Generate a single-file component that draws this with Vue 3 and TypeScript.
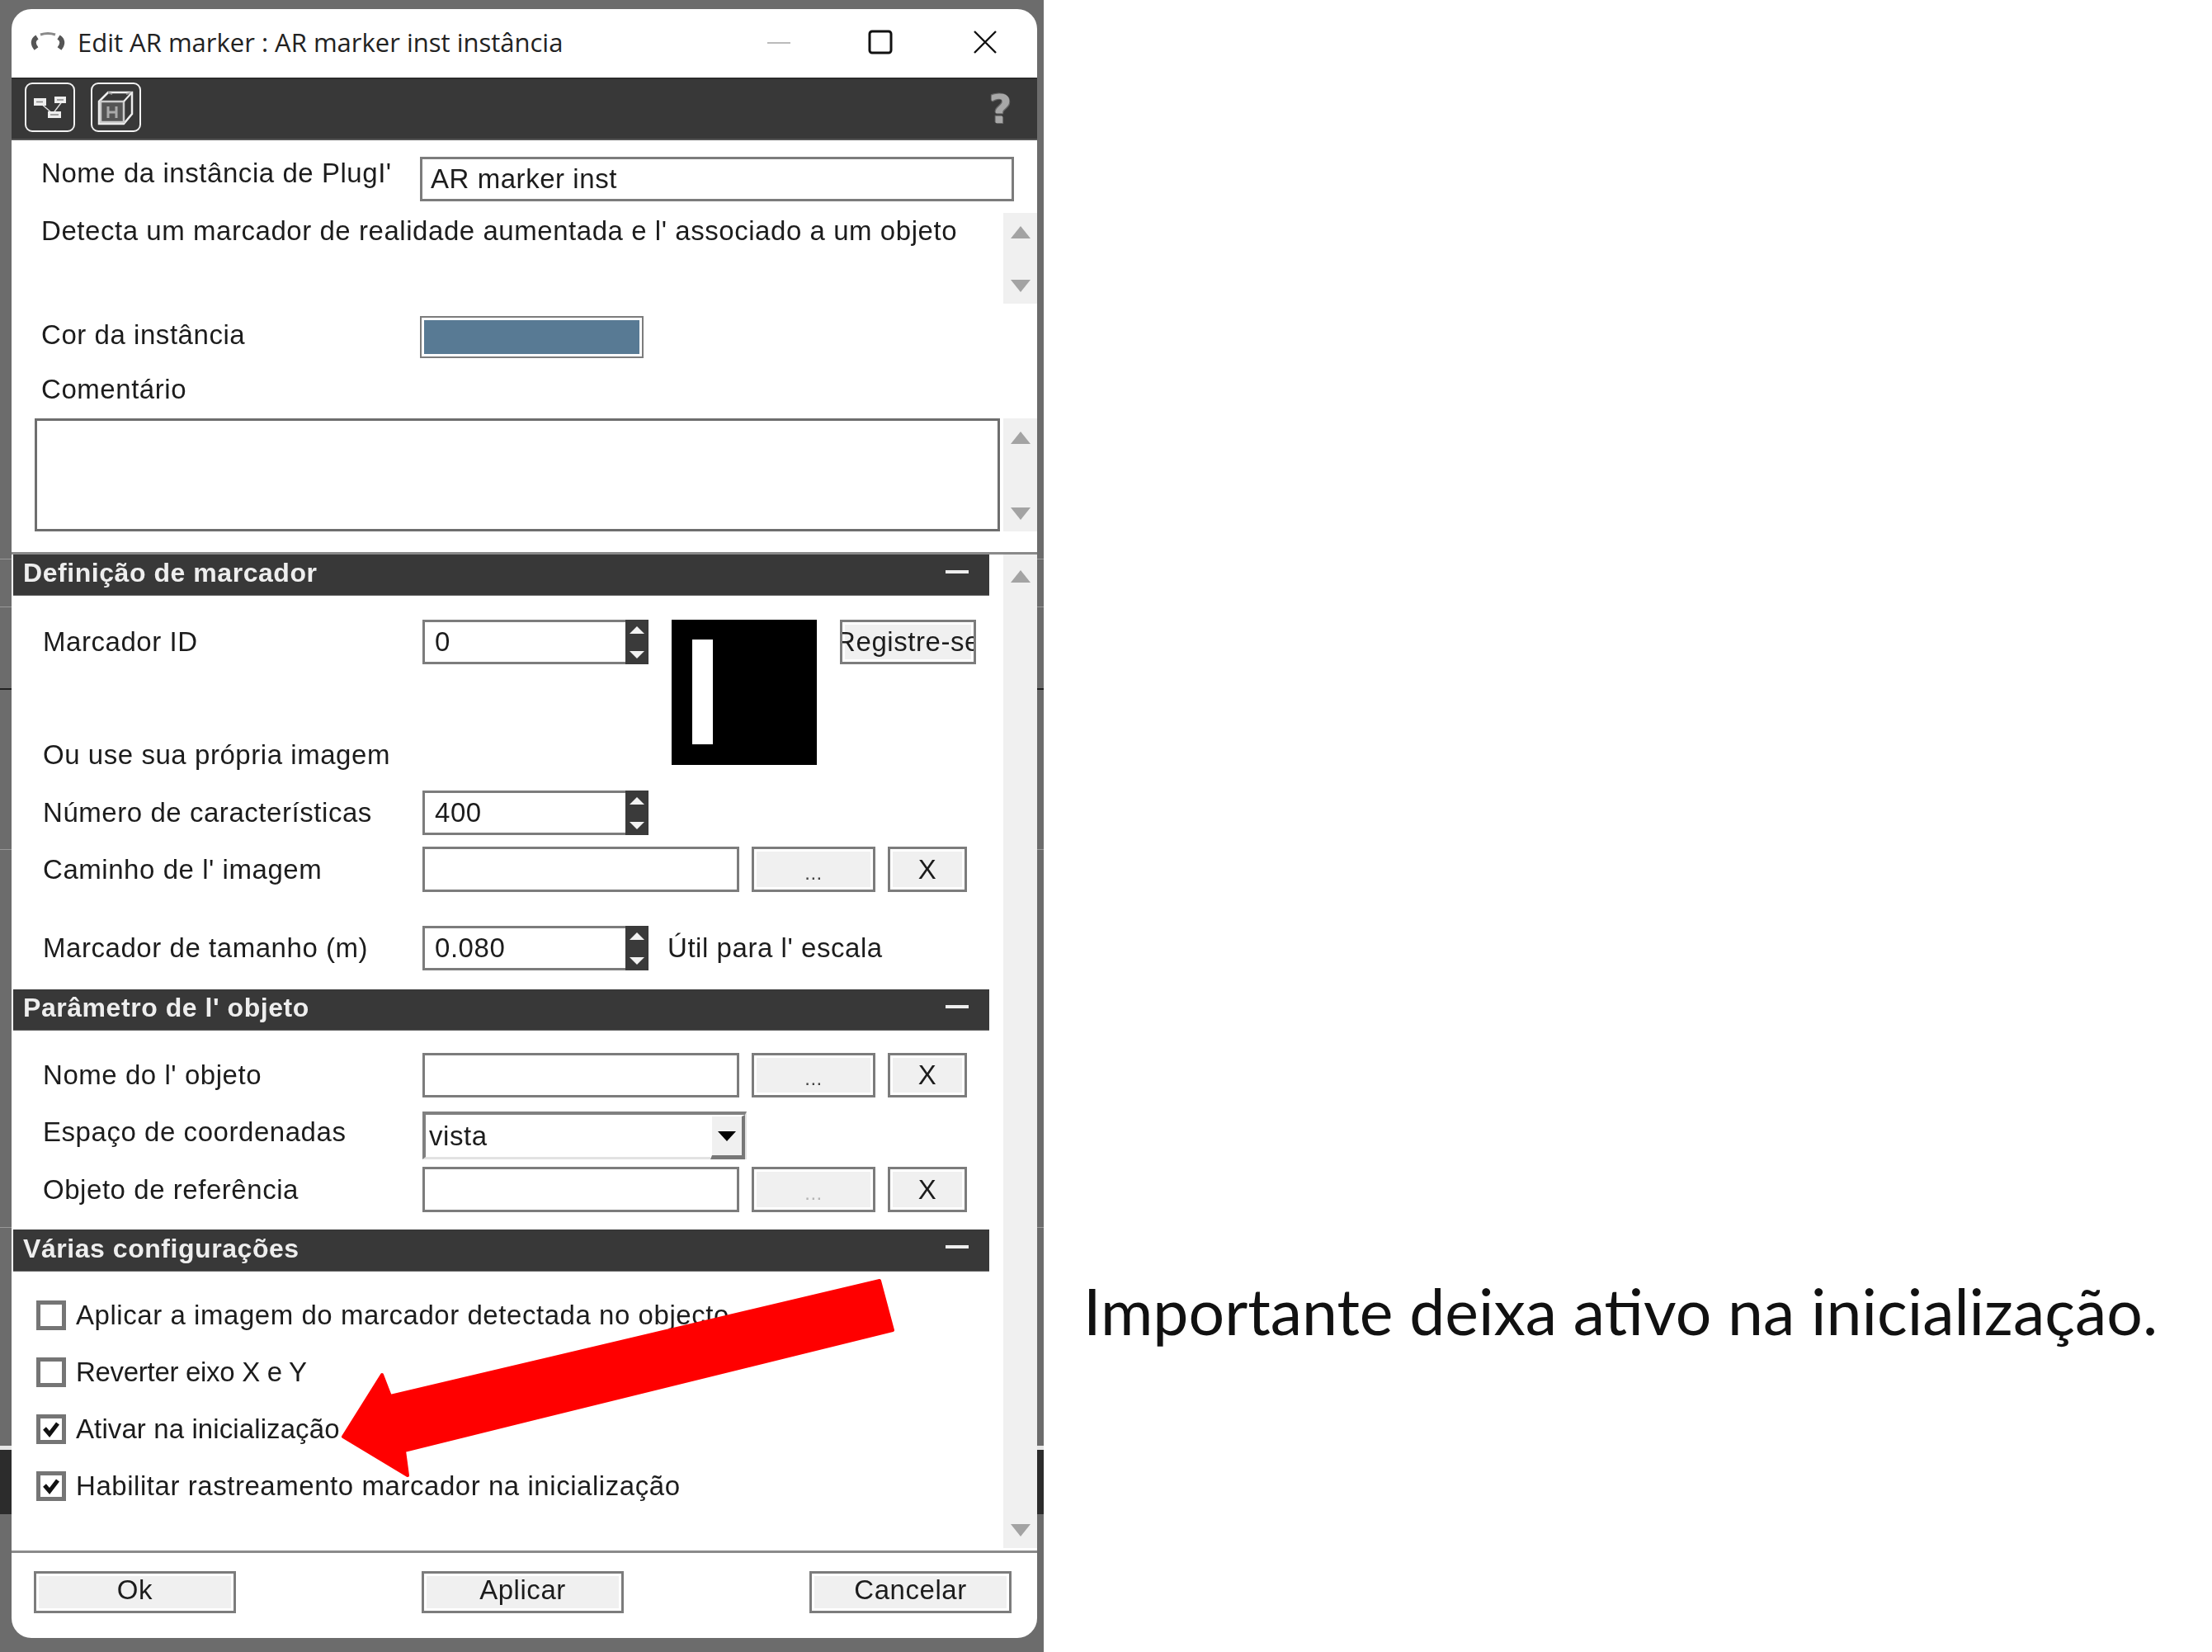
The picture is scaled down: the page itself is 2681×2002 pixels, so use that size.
<script setup lang="ts">
const checks = [
  { label: 'Aplicar a imagem do marcador detectada no objecto', on: false, spacing: 'normal' },
  { label: 'Reverter eixo X e Y', on: false, spacing: 'tighter' },
  { label: 'Ativar na inicialização', on: true, spacing: 'tight' },
  { label: 'Habilitar rastreamento marcador na inicialização', on: true, spacing: 'normal' },
]
const actions = ['Ok', 'Aplicar', 'Cancelar']
</script>

<template>
  <div class="page">
    <div class="backdrop">
      <div class="window">
        <header class="titlebar">
          <svg class="app-icon" width="44" height="26" viewBox="0 0 44 26">
            <path d="M13 4 Q22 1 31 4" fill="none" stroke="#8a8a8a" stroke-width="3" />
            <path d="M9 7 Q1 12 8 21" fill="none" stroke="#555" stroke-width="6" />
            <path d="M35 7 Q43 12 36 21" fill="none" stroke="#555" stroke-width="6" />
          </svg>
          <span class="title">Edit AR marker : AR marker inst instância</span>
          <svg class="win-min" width="28" height="4" viewBox="0 0 28 4"><path d="M0 2H28" stroke="#bbb" stroke-width="2" /></svg>
          <svg class="win-max" width="30" height="30" viewBox="0 0 30 30"><rect x="2" y="2" width="26" height="26" rx="3" fill="none" stroke="#111" stroke-width="3" /></svg>
          <svg class="win-close" width="30" height="30" viewBox="0 0 30 30"><path d="M2 2L28 28M28 2L2 28" stroke="#111" stroke-width="2.4" /></svg>
        </header>

        <div class="toolbar">
          <span class="tool-btn">
            <svg width="61" height="60" viewBox="0 0 61 60">
              <path d="M18 24L34 38L46 22" fill="none" stroke="#ddd" stroke-width="1.5" />
              <rect x="11" y="19" width="15" height="9" fill="#eee" />
              <rect x="36" y="17" width="14" height="8" fill="#eee" />
              <rect x="28" y="35" width="16" height="8" fill="#eee" />
              <path d="M14 23.500H22M39 21H47M31 39H41" stroke="#888" stroke-width="1.5" />
            </svg>
          </span>
          <span class="tool-btn">
            <svg width="61" height="60" viewBox="0 0 61 60">
              <path d="M10 23L21 12H50V38L40 50H10Z" fill="none" stroke="#eee" stroke-width="2.500" />
              <path d="M21 12L26 14M43 14L50 12" stroke="#999" stroke-width="2" />
              <rect x="12" y="23" width="28" height="25" fill="#555" stroke="#ccc" stroke-width="2.500" />
              <path d="M40 23L50 12" stroke="#eee" stroke-width="2" />
              <path d="M21 29V43M31 29V43M21 36H31" stroke="#aaa" stroke-width="3" fill="none" />
            </svg>
          </span>
          <span class="help">?</span>
        </div>

        <section class="top-panel">
          <div class="row name-row">
            <label class="top-label name-label">Nome da instância de PlugI'</label>
            <input class="field name-field" value="AR marker inst" readonly />
          </div>
          <div class="desc-row">
            <p class="desc">Detecta um marcador de realidade aumentada e l' associado a um objeto</p>
            <div class="scroll-strip">
              <i class="arrow-up"></i>
              <i class="arrow-down"></i>
            </div>
          </div>
          <div class="row color-row">
            <label class="top-label color-label">Cor da instância</label>
            <span class="swatch"><b></b></span>
          </div>
          <div class="comment-label">Comentário</div>
          <div class="comment-row">
            <div class="comment-box"></div>
            <div class="scroll-strip comment-strip">
              <i class="arrow-up"></i>
              <i class="arrow-down"></i>
            </div>
          </div>
        </section>

        <div class="scroll-area">
          <div class="sections">
            <div class="section-head">
              <span>Definição de marcador</span><i class="collapse"></i>
            </div>
            <div class="section-body def-body">
              <div class="marker-top">
                <div class="marker-left">
                  <div class="row">
                    <label class="row-label">Marcador ID</label>
                    <div class="spin"><input class="field spin-field" value="0" readonly /><span class="spin-btn"><i></i><i></i></span></div>
                  </div>
                  <div class="own-image">Ou use sua própria imagem</div>
                </div>
                <div class="marker-image"><b></b></div>
                <button class="btn register"><span>Registre-se</span></button>
              </div>
              <div class="row count-row">
                <label class="row-label">Número de características</label>
                <div class="spin"><input class="field spin-field" value="400" readonly /><span class="spin-btn"><i></i><i></i></span></div>
              </div>
              <div class="row path-row">
                <label class="row-label">Caminho de l' imagem</label>
                <input class="field path-field" readonly />
                <button class="btn dots">...</button>
                <button class="btn clear">X</button>
              </div>
              <div class="row size-row">
                <label class="row-label">Marcador de tamanho (m)</label>
                <div class="spin"><input class="field spin-field" value="0.080" readonly /><span class="spin-btn"><i></i><i></i></span></div>
                <span class="hint">Útil para l' escala</span>
              </div>
            </div>

            <div class="section-head">
              <span>Parâmetro de l' objeto</span><i class="collapse"></i>
            </div>
            <div class="section-body obj-body">
              <div class="row object-row">
                <label class="row-label">Nome do l' objeto</label>
                <input class="field path-field" readonly />
                <button class="btn dots">...</button>
                <button class="btn clear">X</button>
              </div>
              <div class="row coord-row">
                <label class="row-label coord-label">Espaço de coordenadas</label>
                <div class="combo">
                  <span class="combo-value">vista</span>
                  <span class="combo-btn"><i></i></span>
                </div>
              </div>
              <div class="row ref-row">
                <label class="row-label">Objeto de referência</label>
                <input class="field path-field" readonly />
                <button class="btn dots dots-off">...</button>
                <button class="btn clear">X</button>
              </div>
            </div>

            <div class="section-head misc-head">
              <span>Várias configurações</span><i class="collapse"></i>
            </div>
            <div class="check-list">
              <div v-for="c in checks" :key="c.label" class="check-row" :class="c.spacing">
                <span class="check">
                  <svg v-if="c.on" width="26" height="26" viewBox="0 0 26 26">
                    <path d="M5 12L11 19L21 6" fill="none" stroke="#111" stroke-width="5" />
                  </svg>
                </span>
                <span>{{ c.label }}</span>
              </div>
            </div>
          </div>
          <div class="scroll-strip main-strip">
            <i class="arrow-up"></i>
            <i class="arrow-down"></i>
          </div>
        </div>

        <footer class="footer">
          <button v-for="a in actions" :key="a" class="btn action">{{ a }}</button>
        </footer>
      </div>

      <svg class="callout" width="720" height="270" viewBox="400 1540 720 270">
        <polygon
          points="1066,1552 1082,1612 490,1758 494,1788 416,1741 463,1666 473,1692"
          fill="#ff0000"
          stroke="#ff0000"
          stroke-width="4"
          stroke-linejoin="round"
        />
      </svg>
    </div>

    <div class="note">Importante deixa ativo na inicialização.</div>
  </div>
</template>

<style>
html,
body {
  margin: 0;
  background: #fff;
}
</style>

<style scoped>
.page {
  display: flex;
  width: 2681px;
  height: 2002px;
  background: #fff;
  overflow: hidden;
}

.backdrop {
  position: relative;
  flex: none;
  width: 1265px;
  height: 2002px;
  box-sizing: border-box;
  padding: 11px 8px 17px 14px;
  background:
    linear-gradient(#e6e6e6, #e6e6e6) 0 1752px / 100% 5px no-repeat,
    linear-gradient(#2c2c2c, #2c2c2c) 0 1757px / 100% 78px no-repeat,
    linear-gradient(#222, #222) 0 834px / 100% 2px no-repeat,
    linear-gradient(#999, #999) 0 677px / 100% 1px no-repeat,
    linear-gradient(#999, #999) 0 735px / 100% 1px no-repeat,
    linear-gradient(#999, #999) 0 1029px / 100% 1px no-repeat,
    linear-gradient(#999, #999) 0 1487px / 100% 1px no-repeat,
    #6c6c6c;
}

.window {
  display: flex;
  flex-direction: column;
  height: 1974px;
  background: #fff;
  border-radius: 24px;
  overflow: hidden;
  font-family: "Liberation Sans", Arial, sans-serif;
  font-size: 33px;
  letter-spacing: 0.55px;
  color: #1c1c1c;
  filter: blur(0.55px);
}

.titlebar {
  display: flex;
  align-items: center;
  flex: none;
  height: 83px;
  padding: 0 0 3px 22px;
  box-sizing: border-box;
}

.title {
  margin-left: 14px;
  font-family: "Open Sans", sans-serif;
  font-size: 31px;
  letter-spacing: 0;
  white-space: nowrap;
  color: #222;
}

.win-min {
  margin-left: auto;
  margin-top: 2px;
}

.win-max {
  margin-left: 94px;
}

.win-close {
  margin-left: 97px;
  margin-right: 48px;
}

.toolbar {
  display: flex;
  align-items: center;
  flex: none;
  height: 76px;
  padding: 0 30px 4px 16px;
  box-sizing: border-box;
  gap: 19px;
  background: #383838;
  border-top: 2px solid #2a2a2a;
  border-bottom: 2px solid #555;
}

.tool-btn {
  display: block;
  width: 61px;
  height: 60px;
  box-sizing: border-box;
  border: 2.500px solid #f2f2f2;
  border-radius: 9px;
}

.tool-btn svg {
  display: block;
  margin: -2.500px;
}

.help {
  margin-left: auto;
  padding-top: 4px;
  font-family: "DejaVu Sans", sans-serif;
  font-weight: 700;
  font-size: 48px;
  line-height: 50px;
  color: #a8a8a8;
  text-shadow: 1px 1px 0 #666, -1px -1px 0 #666;
}

.top-panel {
  flex: none;
  height: 502px;
  box-sizing: border-box;
  border-bottom: 3px solid #8a8a8a;
  padding-top: 20px;
}

.row {
  display: flex;
  align-items: center;
  height: 54px;
}

.name-row,
.color-row {
  padding-left: 36px;
}

.color-row {
  height: 51px;
  margin-top: 15px;
}

.top-label {
  flex: none;
  width: 459px;
  white-space: nowrap;
}

.name-label {
  margin-bottom: 14px;
}

.color-label {
  margin-bottom: 6px;
}

.field {
  display: block;
  box-sizing: border-box;
  height: 54px;
  margin: 0;
  padding: 0 0 0 10px;
  border: 3px solid #7c7c7c;
  border-radius: 0;
  outline: none;
  background: #fff;
  font: inherit;
  letter-spacing: inherit;
  color: inherit;
}

.name-field {
  width: 720px;
}

.desc-row {
  display: flex;
  justify-content: flex-end;
  position: relative;
  height: 110px;
  margin-top: 14px;
}

.desc {
  position: absolute;
  left: 36px;
  top: 2px;
  margin: 0;
  white-space: nowrap;
  line-height: 40px;
}

.scroll-strip {
  display: flex;
  flex-direction: column;
  align-items: center;
  justify-content: space-between;
  flex: none;
  width: 41px;
  box-sizing: border-box;
  padding: 16px 0 14px;
  background: #f0f0f0;
}

.arrow-up,
.arrow-down {
  display: block;
  width: 0;
  height: 0;
  border-left: 12px solid transparent;
  border-right: 12px solid transparent;
}

.arrow-up {
  border-bottom: 15px solid #a3a3a3;
}

.arrow-down {
  border-top: 15px solid #a3a3a3;
}

.swatch {
  display: block;
  box-sizing: border-box;
  width: 271px;
  height: 51px;
  padding: 3px;
  border: 2px solid #7c7c7c;
  background: #fff;
}

.swatch b {
  display: block;
  height: 100%;
  background: #587a94;
}

.comment-label {
  height: 44px;
  margin: 16px 0 13px 36px;
  line-height: 44px;
}

.comment-row {
  display: flex;
  gap: 4px;
  height: 137px;
  padding-left: 28px;
}

.comment-box {
  flex: none;
  width: 1170px;
  box-sizing: border-box;
  border: 3px solid #6e6e6e;
  background: #fff;
}

.scroll-area {
  display: flex;
  flex: none;
  height: 1207px;
  padding-left: 2px;
  gap: 17px;
}

.sections {
  flex: none;
  width: 1183px;
}

.section-head {
  display: flex;
  align-items: center;
  justify-content: space-between;
  box-sizing: border-box;
  height: 50px;
  padding: 0 25px 4px 12px;
  background: #383838;
  border-bottom: 1px solid #666;
  font-weight: 700;
  font-size: 32px;
  color: #eee;
}

.misc-head {
  height: 51px;
}

.collapse {
  display: block;
  width: 28px;
  height: 4px;
  margin-bottom: 4px;
  background: #eee;
}

.section-body {
  padding-left: 36px;
}

.def-body {
  padding-top: 29px;
  padding-bottom: 23px;
}

.obj-body {
  padding-bottom: 21px;
}

.row-label {
  flex: none;
  width: 460px;
  white-space: nowrap;
}

.marker-top {
  display: flex;
  align-items: flex-start;
}

.marker-left {
  flex: none;
  width: 734px;
}

.own-image {
  height: 44px;
  margin-top: 88px;
  line-height: 44px;
  white-space: nowrap;
}

.marker-image {
  flex: none;
  width: 176px;
  height: 176px;
  margin-left: 28px;
  padding: 24px 0 0 25px;
  box-sizing: border-box;
  background: #000;
}

.marker-image b {
  display: block;
  width: 25px;
  height: 127px;
  background: #fff;
}

.btn {
  box-sizing: border-box;
  margin: 0;
  padding: 0;
  border: 3px solid #7c7c7c;
  border-radius: 0;
  background: #f0f0f0;
  box-shadow: inset 0 0 0 3px #fff;
  font: inherit;
  letter-spacing: inherit;
  color: inherit;
}

.register {
  display: flex;
  justify-content: center;
  align-items: center;
  flex: none;
  width: 165px;
  height: 54px;
  margin-left: 28px;
  overflow: hidden;
}

.register span {
  flex: none;
  white-space: nowrap;
}

.spin {
  display: flex;
  flex: none;
  width: 274px;
  height: 54px;
}

.spin-field {
  flex: none;
  width: 246px;
  padding-left: 12px;
  border-right: none;
}

.spin-btn {
  display: flex;
  flex-direction: column;
  align-items: center;
  justify-content: space-between;
  flex: none;
  width: 28px;
  box-sizing: border-box;
  padding: 8px 0 7px;
  background: #3a3a3a;
}

.spin-btn i {
  display: block;
  width: 0;
  height: 0;
  border-left: 9px solid transparent;
  border-right: 9px solid transparent;
  border-bottom: 9px solid #f2f2f2;
}

.spin-btn i:last-child {
  border-bottom: none;
  border-top: 9px solid #f2f2f2;
}

.count-row {
  height: 55px;
  margin-top: 20px;
}

.path-row {
  height: 55px;
  margin-top: 14px;
}

.size-row {
  margin-top: 41px;
}

.hint {
  margin-left: 23px;
  white-space: nowrap;
}

.path-field {
  flex: none;
  width: 384px;
  height: 100%;
}

.dots {
  flex: none;
  width: 150px;
  height: 100%;
  margin-left: 15px;
  padding-top: 8px;
  font-size: 24px;
  color: #444;
}

.dots-off {
  color: #b5b5b5;
}

.clear {
  flex: none;
  width: 96px;
  height: 100%;
  margin-left: 15px;
}

.object-row {
  margin-top: 27px;
}

.coord-row {
  height: 58px;
  margin-top: 17px;
}

.coord-label {
  margin-bottom: 8px;
}

.ref-row {
  height: 55px;
  margin-top: 9px;
}

.combo {
  display: flex;
  flex: none;
  width: 393px;
  height: 58px;
  box-sizing: border-box;
  border-top: 4px solid #808080;
  border-left: 4px solid #808080;
  border-bottom: 3px solid #e2e2e2;
  border-right: 2px solid #e2e2e2;
}

.combo-value {
  flex: 1;
  padding: 4px 0 0 4px;
  line-height: 44px;
}

.combo-btn {
  display: flex;
  align-items: center;
  justify-content: center;
  flex: none;
  width: 42px;
  box-sizing: border-box;
  border-top: 2px solid #fff;
  border-left: 2px solid #fff;
  border-right: 4px solid #777;
  border-bottom: 5px solid #777;
  margin-bottom: -3px;
  background: #f0f0f0;
}

.combo-btn i {
  display: block;
  width: 0;
  height: 0;
  border-left: 11px solid transparent;
  border-right: 11px solid transparent;
  border-top: 12px solid #000;
}

.check-list {
  display: flex;
  flex-direction: column;
  gap: 25px;
  padding: 31px 0 0 28px;
}

.check-row {
  display: flex;
  align-items: center;
  height: 44px;
  gap: 12px;
  white-space: nowrap;
}

.check-row.tight {
  letter-spacing: 0.1px;
}

.check-row.tighter {
  letter-spacing: -0.3px;
}

.check {
  display: flex;
  align-items: center;
  justify-content: center;
  flex: none;
  width: 36px;
  height: 36px;
  box-sizing: border-box;
  border: 5px solid #757575;
  background: #fff;
}

.main-strip {
  height: 1204px;
  padding: 19px 0 14px;
}

.footer {
  display: flex;
  justify-content: space-between;
  flex: none;
  height: 106px;
  box-sizing: border-box;
  padding: 22px 31px 0 27px;
  border-top: 3px solid #8a8a8a;
}

.action {
  width: 245px;
  height: 51px;
  padding-bottom: 6px;
}

.callout {
  position: absolute;
  left: 400px;
  top: 1540px;
}

.note {
  align-self: flex-start;
  margin: 1538px 0 0 48px;
  font-family: Lato, sans-serif;
  font-size: 77px;
  line-height: 100px;
  color: #111;
  white-space: nowrap;
}
</style>
